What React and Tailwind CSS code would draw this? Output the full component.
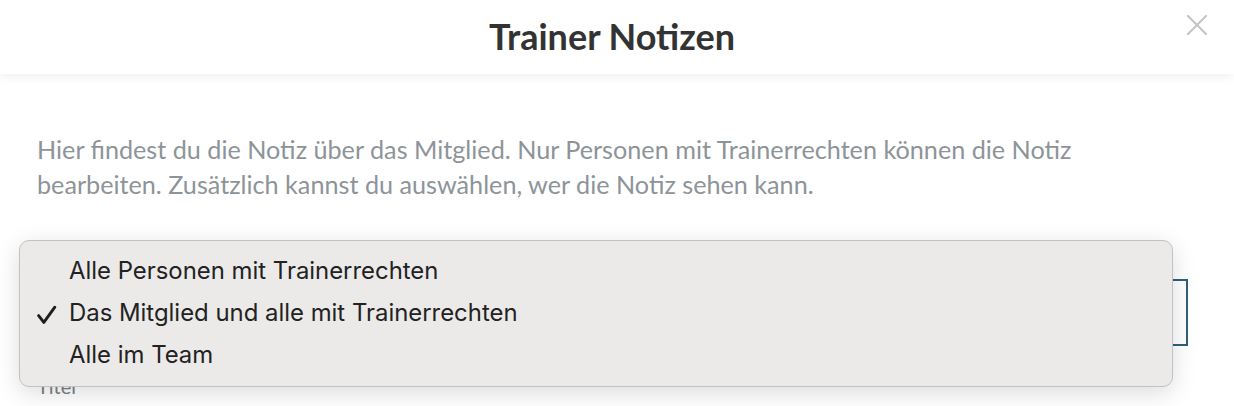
import React from "react";

export default function App() {
  return (
    <div className="relative w-[1234px] h-[406px] overflow-hidden bg-white" style={{ fontFamily: "Lato, 'Noto Sans', sans-serif" }}>
      <header className="relative h-[74px] flex items-center justify-center pr-[10px] bg-white shadow-[0_2px_10px_rgba(0,0,0,0.07)] z-10">
        <h1 className="text-[36px] font-bold text-[#333333] leading-none -mt-[3px]">Trainer Notizen</h1>
        <button className="absolute right-[27px] top-[15px] w-[20px] h-[20px]">
          <svg viewBox="0 0 20 20" width="20" height="20" stroke="#c4c4c4" strokeWidth="2" strokeLinecap="square">
            <path d="M1 1 L19 19 M19 1 L1 19" />
          </svg>
        </button>
      </header>

      <main className="px-[37px] pt-[58px]">
        <p className="w-[1100px] text-[25.2px] leading-[35px] text-[#8d9499]">
          Hier findest du die Notiz über das Mitglied. Nur Personen mit Trainerrechten können die Notiz bearbeiten. Zusätzlich kannst du auswählen, wer die Notiz sehen kann.
        </p>
        <div className="mt-[77px] w-[1151px] h-[67px] border-2 border-[#2f6177] bg-white"></div>
        <div className="mt-[26px] text-[20px] leading-[28px] text-[#7b8085]">Titel</div>
      </main>

      <div
        className="absolute left-[19px] top-[240px] w-[1154px] h-[147px] rounded-[10px] bg-[#ebeae9] border border-[#c2c2c2] shadow-[0_6px_24px_rgba(0,0,0,0.14)] py-[9px] text-[23.9px] text-[#222222]"
        style={{ fontFamily: "Inter, 'Liberation Sans', sans-serif" }}
      >
        <div className="h-[42px] flex items-center pl-[49px]">Alle Personen mit Trainerrechten</div>
        <div className="relative h-[42px] flex items-center pl-[49px]">
          <svg className="absolute left-[16px] top-[10px]" width="23" height="23" viewBox="0 0 22 22" fill="none" stroke="#1e1e1e" strokeWidth="2.8" strokeLinecap="round" strokeLinejoin="round">
            <path d="M2.5 13 L7.5 19.5 L18 5" />
          </svg>
          Das Mitglied und alle mit Trainerrechten
        </div>
        <div className="h-[42px] flex items-center pl-[49px]">Alle im Team</div>
      </div>
    </div>
  );
}
